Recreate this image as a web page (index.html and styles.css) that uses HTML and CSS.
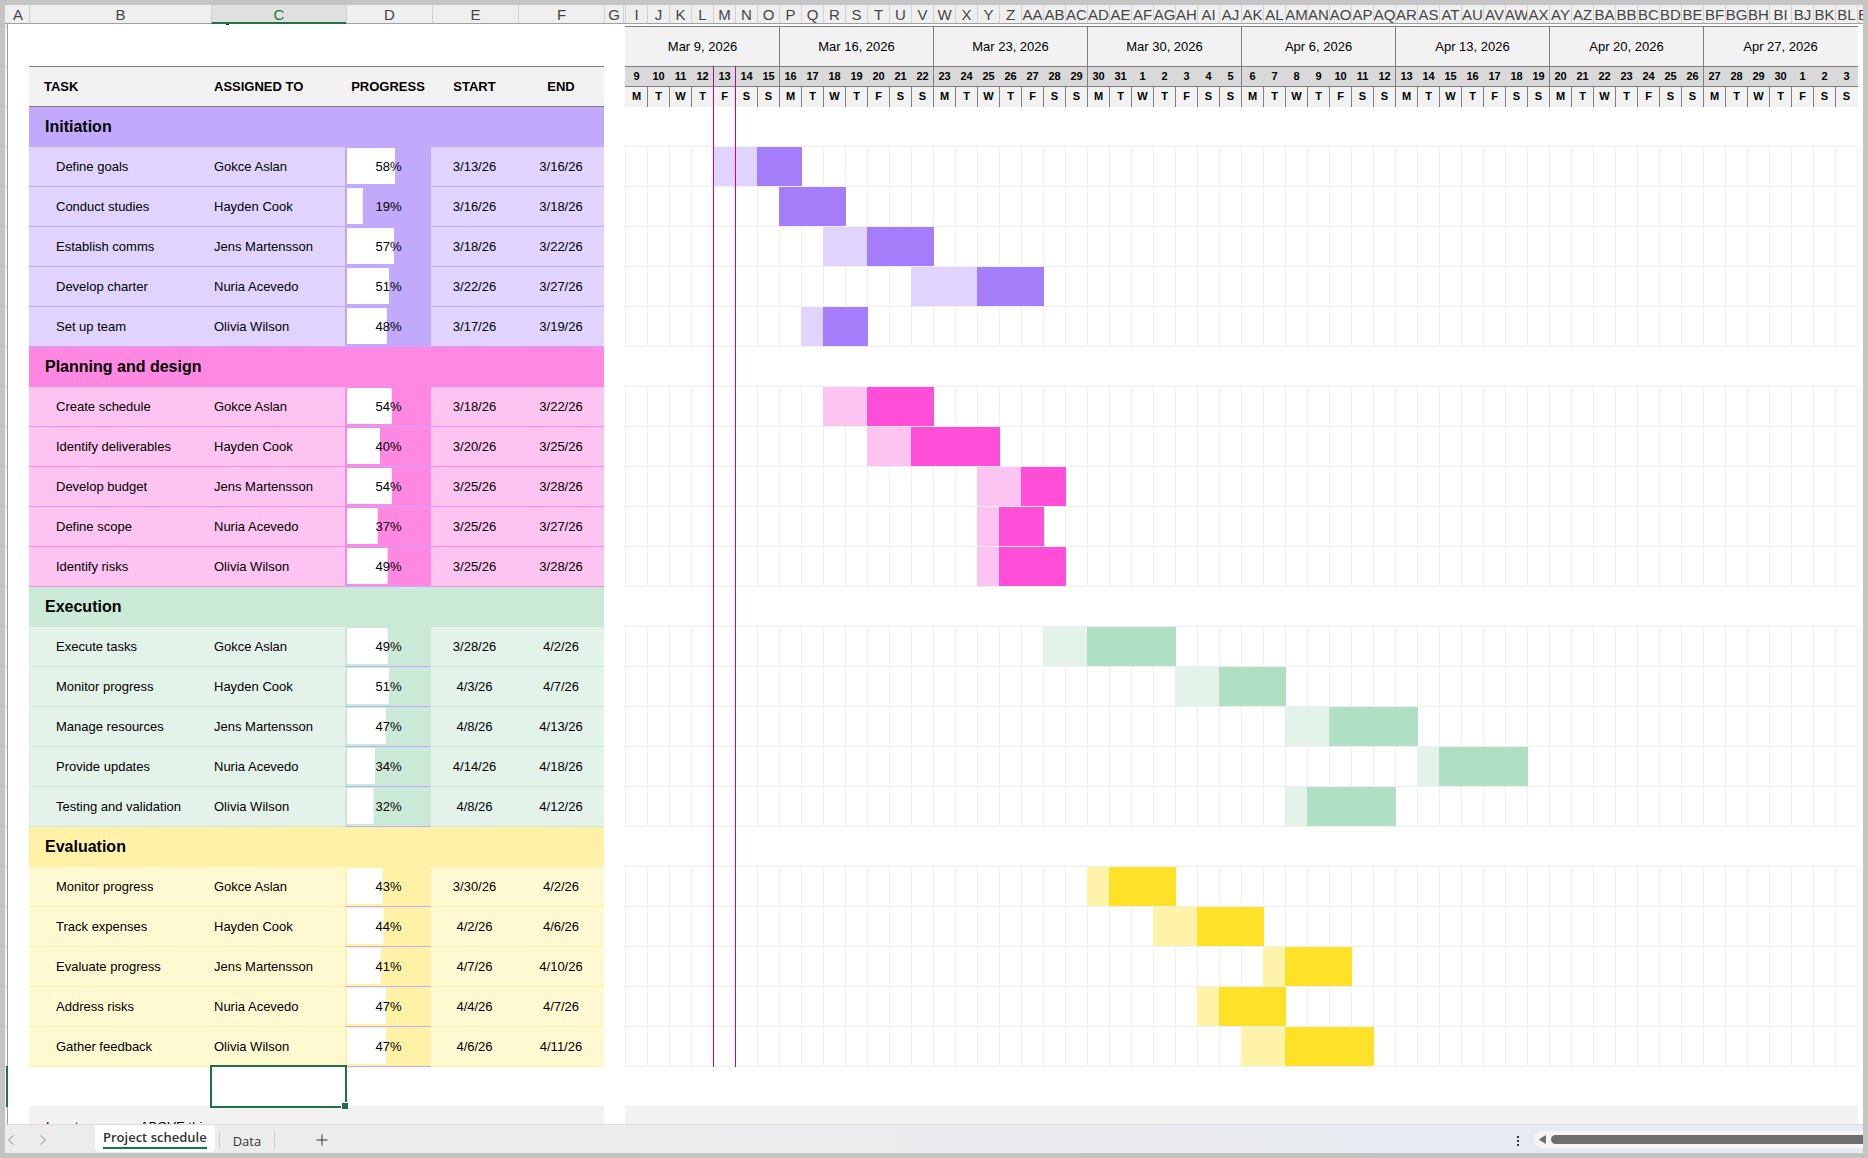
FILE: index.html
```html
<!DOCTYPE html>
<html lang="en">
<head>
    <meta charset="UTF-8" />
    <meta name="viewport" content="width=device-width, initial-scale=1.0" />
    <title>Project schedule</title>
    <link rel="stylesheet" href="styles.css">
</head>
<body>
    <div class="workbook">
        <div class="column-headers" id="columnHeaders"></div>

        <main class="sheet">
            <div class="row-headers"><span class="row-selected"></span></div>

            <div class="schedule">
                <span class="title-tail"></span>
                <table class="tasks">
                    <colgroup>
                        <col class="col-task"><col class="col-person"><col class="col-progress"><col class="col-start"><col class="col-end">
                    </colgroup>
                    <thead>
                        <tr>
                            <th class="left">TASK</th>
                            <th class="name">ASSIGNED TO</th>
                            <th>PROGRESS</th>
                            <th>START</th>
                            <th>END</th>
                        </tr>
                    </thead>
                    <tbody id="taskRows"></tbody>
                </table>
                <div class="blank-row"><span class="selected-cell"></span></div>
                <div class="note-row">Insert new rows ABOVE this one</div>
            </div>

            <div class="gantt">
                <div class="weeks" id="weeks"></div>
                <div class="days" id="days"></div>
                <div class="weekdays" id="weekdays"></div>
                <div class="chart" id="chart"></div>
                <div class="blank-row"></div>
                <div class="note-row"></div>
                <div class="today"><span class="today-mark"></span></div>
            </div>
        </main>

        <footer class="tab-bar">
            <button class="nav-button" aria-label="Previous sheet">
                <svg width="8" height="12" viewBox="0 0 8 12"><path d="M6.500 1.500 L1.500 6 L6.500 10.500" /></svg>
            </button>
            <button class="nav-button" aria-label="Next sheet">
                <svg width="8" height="12" viewBox="0 0 8 12"><path d="M1.500 1.500 L6.500 6 L1.500 10.500" /></svg>
            </button>
            <button class="tab active"><span>Project schedule</span></button>
            <button class="tab">Data</button>
            <button class="add-sheet" aria-label="New sheet">
                <svg width="12" height="12" viewBox="0 0 12 12"><path d="M6 0.500 V11.500 M0.500 6 H11.500" /></svg>
            </button>
            <button class="more" aria-label="More">
                <svg width="2" height="10" viewBox="0 0 2 10"><path d="M0 0h2v2H0zM0 4h2v2H0zM0 8h2v2H0z" /></svg>
            </button>
            <div class="scrollbar">
                <button class="scroll-left" aria-label="Scroll left">
                    <svg width="7" height="9" viewBox="0 0 7 9"><path d="M6 0.500 Q7 0 7 1 V8 Q7 9 6 8.500 L0.500 5 Q0 4.500 0.500 4 Z" /></svg>
                </button>
                <div class="scroll-thumb"></div>
            </div>
        </footer>
    </div>

    <script src="script.js"></script>
</body>
</html>
```

FILE: styles.css
```css
* {
    margin: 0;
    padding: 0;
    box-sizing: border-box;
}

body {
    height: 100vh;
    padding: 5px;
    background: #c4c4c4;
    font-family: "Liberation Sans", Arial, sans-serif;
    font-size: 13px;
    color: #000;
    overflow: hidden;
}

button {
    border: none;
    background: none;
    font: inherit;
    color: inherit;
    cursor: pointer;
}

svg {
    display: block;
}

.workbook {
    height: 100%;
    display: flex;
    flex-direction: column;
    background: #fff;
    overflow: hidden;
}

/* Column letters */
.column-headers {
    flex: none;
    display: grid;
    grid-template-columns: 24px 182px 135px 86px 86px 86px 19px 2px repeat(56, minmax(0, 1fr)) 6px;
    height: 19px;
    background: #efefef;
    border-bottom: 1px solid #a0a0a0;
    font-size: 15px;
    line-height: 20px;
    color: #444;
}

.column-headers span {
    display: flex;
    justify-content: center;
    overflow: hidden;
    white-space: nowrap;
    border-left: 1px solid #d2d2d2;
}

.column-headers span:first-child {
    padding-left: 2px;
    border-left: none;
}

.column-headers .current {
    margin-bottom: -1px;
    background: #e0e0e0;
    border-bottom: 2px solid #217346;
    color: #217346;
}

.column-headers .clipped {
    justify-content: flex-start;
}

/* Sheet */
.sheet {
    flex: 1;
    min-height: 0;
    display: flex;
    overflow: hidden;
}

.row-headers {
    flex: none;
    width: 3px;
    padding-top: 1042px;
    border-right: 1px solid #a0a0a0;
    background: linear-gradient(#d2d2d2 1px, #f5f5f5 1px) 0 2px / 100% 40px;
}

.row-selected {
    display: block;
    width: 3px;
    height: 41px;
    border-right: 2px solid #217346;
}

.schedule {
    flex: none;
    width: 575px;
    margin: 0 21px;
}

.title-tail {
    display: block;
    width: 3px;
    height: 1px;
    margin: 0 0 41px 197px;
    background: #222;
}

.tasks {
    width: 100%;
    table-layout: fixed;
    border-collapse: separate;
    border-spacing: 0;
}

.col-task { width: 182px; }
.col-person { width: 134px; }
.col-progress { width: 86px; }
.col-start { width: 87px; }
.col-end { width: 86px; }

.tasks th {
    height: 41px;
    background: #f2f2f2;
    border-top: 1px solid #808080;
    border-bottom: 1px solid #808080;
    white-space: nowrap;
}

.tasks td {
    height: 40px;
    background: var(--light);
    border-bottom: 1px solid var(--main);
    text-align: center;
    white-space: nowrap;
}

.tasks .left {
    padding-left: 15px;
    text-align: left;
}

.tasks .group {
    padding-left: 16px;
    background: var(--main);
    text-align: left;
    font-size: 16px;
    font-weight: bold;
}

.tasks .task {
    padding-left: 27px;
    text-align: left;
}

.tasks .name {
    padding-left: 3px;
    text-align: left;
}

.tasks .progress {
    padding: 1px 1px 2px 2px;
    background: var(--main);
    border-bottom-color: #c1a9fb;
}

.progress-track {
    display: block;
    height: 36px;
    line-height: 38px;
    background: linear-gradient(#fff, #fff) no-repeat 0 0 / var(--done) 100%;
}

.initiation { --main: #c1a9fb; --light: #e0d4fe; --dark: #a47dfb; --done-bar: #e0d4fe; }
.planning { --main: #ff88e2; --light: #fec4f1; --dark: #ff4fd8; --done-bar: #fec4f1; }
.execution { --main: #cbe9d7; --light: #e4f3ea; --dark: #b0e0c3; --done-bar: #e4f3ea; }
.evaluation { --main: #fff1a6; --light: #fff9d2; --dark: #ffe128; --done-bar: #fff3a9; }

.blank-row {
    height: 39px;
    position: relative;
}

/* Active cell outline lies over the neighbouring cells */
.selected-cell {
    position: absolute;
    left: 181px;
    top: -2px;
    width: 137px;
    height: 43px;
    border: 2px solid #217346;
}

.selected-cell::after {
    content: "";
    position: absolute;
    right: -3px;
    bottom: -3px;
    width: 6px;
    height: 6px;
    background: #217346;
    border-left: 1px solid #fff;
    border-top: 1px solid #fff;
}

.note-row {
    height: 41px;
    padding-left: 16px;
    background: #f2f2f2;
    font-style: italic;
    line-height: 41px;
}

/* Timeline */
.gantt {
    flex: 1;
    min-width: 0;
    position: relative;
    margin-right: 5px;
    padding-top: 2px;
}

.weeks,
.days,
.weekdays {
    display: grid;
    padding-right: 1px;
    border-top: 1px solid #808080;
    text-align: center;
}

.weeks {
    grid-template-columns: repeat(8, 1fr);
    height: 40px;
    background: #f2f2f2;
    font-size: 13px;
    line-height: 39px;
}

.days,
.weekdays {
    grid-template-columns: repeat(56, 1fr);
    height: 20px;
    font-size: 11px;
    font-weight: bold;
    line-height: 19px;
}

.days {
    background: #d9d9d9;
}

.weekdays {
    height: 21px;
    background: #f2f2f2;
    line-height: 18px;
}

.weeks span,
.weekdays span,
.days span {
    border-left: 1px solid transparent;
}

.weeks span + span,
.weekdays span + span,
.days span + .week-start {
    border-left-color: #808080;
}

.chart-row {
    display: grid;
    grid-template-columns: repeat(56, 1fr);
    height: 40px;
    border-right: 1px solid #f0f0f0;
    border-bottom: 1px solid #f0f0f0;
    background: linear-gradient(90deg, #f0f0f0 1px, transparent 1px) 0 0 / calc(100% / 56) 100%;
}

.chart-row.heading {
    border-right-color: transparent;
    background: none;
}

.bar {
    margin-right: -1px;
    background: var(--dark);
}

.bar.done {
    margin-right: 0;
    background: var(--done-bar);
}

.today {
    position: absolute;
    top: 42px;
    left: 0;
    right: 0;
    height: 1001px;
    display: grid;
    grid-template-columns: repeat(56, 1fr);
    padding-right: 1px;
    pointer-events: none;
}

.today-mark {
    grid-column: 5;
    margin-right: -1px;
    border-left: 1px solid #c800a1;
    border-right: 1px solid #c800a1;
}

/* Sheet tabs */
.tab-bar {
    flex: none;
    display: flex;
    height: 29px;
    border-top: 1px solid #dcdcdc;
    background: linear-gradient(90deg, #ececec 30%, #e7eaf0 75%);
    font-family: "Open Sans", "Noto Sans", sans-serif;
    font-size: 13px;
    color: #333;
}

.nav-button {
    width: 32px;
    height: 28px;
    padding: 2px 0 0 2px;
    color: #8a8a8a;
}

.tab {
    height: 28px;
    padding: 3px 13px 0 14px;
}

.tab.active {
    height: 27px;
    margin: 0 4px 0 26px;
    padding: 0 8px 4px;
    background: #fff;
    border-radius: 0 0 5px 5px;
    font-weight: 600;
}

.tab.active span {
    display: block;
    height: 24px;
    line-height: 24px;
    border-bottom: 2px solid #107c41;
}

.tab:not(.active),
.add-sheet {
    background: linear-gradient(#cfcfcf, #cfcfcf) no-repeat 0 6px / 1px 18px;
}

.nav-button svg,
.add-sheet svg {
    fill: none;
    stroke: currentColor;
}

.add-sheet {
    padding: 2px 42px 0;
}

.more {
    margin-left: auto;
    padding: 4px 15px 0;
    fill: #333;
}

.scrollbar {
    display: flex;
    align-items: center;
    gap: 5px;
    width: 329px;
    height: 17px;
    margin-top: 6px;
    padding-left: 5px;
    border-radius: 9px 0 0 9px;
    background: #f5f5f5;
}

.scroll-left svg {
    fill: #6f6f6f;
}

.scroll-thumb {
    flex: 1;
    height: 9px;
    border-radius: 5px 0 0 5px;
    background: #6f6f6f;
}
```

FILE: script.js
```js
const groups = [
    { name: 'Initiation', theme: 'initiation', tasks: [
        ['Define goals', 'Gokce Aslan', 58, '3/13/26', '3/16/26'],
        ['Conduct studies', 'Hayden Cook', 19, '3/16/26', '3/18/26'],
        ['Establish comms', 'Jens Martensson', 57, '3/18/26', '3/22/26'],
        ['Develop charter', 'Nuria Acevedo', 51, '3/22/26', '3/27/26'],
        ['Set up team', 'Olivia Wilson', 48, '3/17/26', '3/19/26']
    ] },
    { name: 'Planning and design', theme: 'planning', tasks: [
        ['Create schedule', 'Gokce Aslan', 54, '3/18/26', '3/22/26'],
        ['Identify deliverables', 'Hayden Cook', 40, '3/20/26', '3/25/26'],
        ['Develop budget', 'Jens Martensson', 54, '3/25/26', '3/28/26'],
        ['Define scope', 'Nuria Acevedo', 37, '3/25/26', '3/27/26'],
        ['Identify risks', 'Olivia Wilson', 49, '3/25/26', '3/28/26']
    ] },
    { name: 'Execution', theme: 'execution', tasks: [
        ['Execute tasks', 'Gokce Aslan', 49, '3/28/26', '4/2/26'],
        ['Monitor progress', 'Hayden Cook', 51, '4/3/26', '4/7/26'],
        ['Manage resources', 'Jens Martensson', 47, '4/8/26', '4/13/26'],
        ['Provide updates', 'Nuria Acevedo', 34, '4/14/26', '4/18/26'],
        ['Testing and validation', 'Olivia Wilson', 32, '4/8/26', '4/12/26']
    ] },
    { name: 'Evaluation', theme: 'evaluation', tasks: [
        ['Monitor progress', 'Gokce Aslan', 43, '3/30/26', '4/2/26'],
        ['Track expenses', 'Hayden Cook', 44, '4/2/26', '4/6/26'],
        ['Evaluate progress', 'Jens Martensson', 41, '4/7/26', '4/10/26'],
        ['Address risks', 'Nuria Acevedo', 47, '4/4/26', '4/7/26'],
        ['Gather feedback', 'Olivia Wilson', 47, '4/6/26', '4/11/26']
    ] }
];

const months = ['Jan', 'Feb', 'Mar', 'Apr', 'May'];
const letters = 'ABCDEFGHIJKLMNOPQRSTUVWXYZ';
const dayLength = 24 * 60 * 60 * 1000;
const firstDay = Date.UTC(2026, 2, 9);

// Day index of an m/d/yy date on the timeline
function dayIndex(text) {
    const [month, day, year] = text.split('/').map(Number);
    return (Date.UTC(2000 + year, month - 1, day) - firstDay) / dayLength;
}

function columnName(n) {
    return n < 26 ? letters[n] : letters[Math.floor(n / 26) - 1] + letters[n % 26];
}

// Column letters, H is narrowed to almost nothing
let headers = '';
for (let i = 0; i <= 64; i++) {
    const cls = i === 2 ? 'current' : i === 64 ? 'clipped' : '';
    headers += `<span class="${cls}">${i === 7 ? '' : columnName(i)}</span>`;
}
document.getElementById('columnHeaders').innerHTML = headers;

let weeks = '', days = '', weekdays = '';
for (let i = 0; i < 56; i++) {
    const date = new Date(firstDay + i * dayLength);
    if (i % 7 === 0) {
        weeks += `<span>${months[date.getUTCMonth()]} ${date.getUTCDate()}, 2026</span>`;
    }
    days += `<span class="${i % 7 === 0 ? 'week-start' : ''}">${date.getUTCDate()}</span>`;
    weekdays += `<span>${'MTWTFSS'[i % 7]}</span>`;
}
document.getElementById('weeks').innerHTML = weeks;
document.getElementById('days').innerHTML = days;
document.getElementById('weekdays').innerHTML = weekdays;

let rows = '', chart = '';
groups.forEach(group => {
    rows += `<tr class="${group.theme}"><td class="group" colspan="5">${group.name}</td></tr>`;
    chart += '<div class="chart-row heading"></div>';

    group.tasks.forEach(([task, person, percent, start, end]) => {
        rows += `<tr class="${group.theme}">
            <td class="task">${task}</td>
            <td class="name">${person}</td>
            <td class="progress"><span class="progress-track" style="--done: ${percent}%">${percent}%</span></td>
            <td>${start}</td>
            <td>${end}</td>
        </tr>`;

        const from = dayIndex(start) + 1;
        const to = dayIndex(end) + 2;
        const split = from + Math.floor((to - from) * percent / 100);
        chart += `<div class="chart-row ${group.theme}">`;
        if (split > from) {
            chart += `<div class="bar done" style="grid-column: ${from} / ${split}"></div>`;
        }
        chart += `<div class="bar" style="grid-column: ${split} / ${to}"></div></div>`;
    });
});
document.getElementById('taskRows').innerHTML = rows;
document.getElementById('chart').innerHTML = chart;
```
